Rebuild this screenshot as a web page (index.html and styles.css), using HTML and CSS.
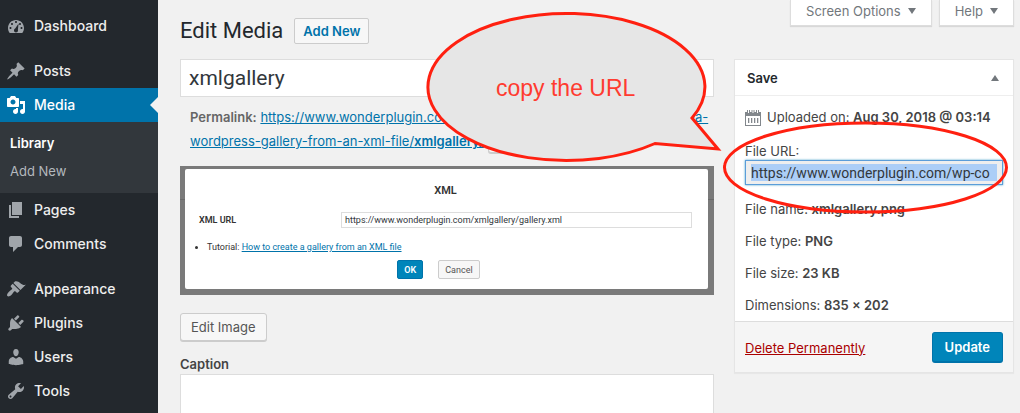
FILE: index.html
```html
<!DOCTYPE html>
<html lang="en">
  <head>
    <meta charset="UTF-8" />
    <meta name="viewport" content="width=device-width, initial-scale=1.0" />
    <title>Edit Media</title>
    <link rel="stylesheet" href="styles.css">
  </head>
  <body>
    <nav class="sidebar">
      <a href="#" class="menu-item">
        <svg class="icon" viewBox="0 0 20 20"><path fill-rule="evenodd" d="M3.76 17h12.48c1.1-1.37 1.76-3.11 1.76-5 0-4.42-3.58-8-8-8s-8 3.58-8 8c0 1.89.66 3.63 1.76 5zM10 5c.55 0 1 .45 1 1s-.45 1-1 1-1-.45-1-1 .45-1 1-1zM6 7c.55 0 1 .45 1 1s-.45 1-1 1-1-.45-1-1 .45-1 1-1zm8 0c.55 0 1 .45 1 1s-.45 1-1 1-1-.45-1-1 .45-1 1-1zM4.5 11c.55 0 1 .45 1 1s-.45 1-1 1-1-.45-1-1 .45-1 1-1zm11 0c.55 0 1 .45 1 1s-.45 1-1 1-1-.45-1-1 .45-1 1-1zM12.6 7.5l-.7 6.1c.1.2.1.5.1.8 0 1.1-.9 2-2 2s-2-.9-2-2c0-.8.5-1.5 1.2-1.8z"/></svg>
        Dashboard
      </a>
      <a href="#" class="menu-item menu-group">
        <svg class="icon" viewBox="0 0 20 20"><path d="M10.44 3.02l1.82-1.82 6.36 6.35-1.83 1.82c-1.05-.68-2.48-.57-3.41.36l-.75.75c-.92.93-1.04 2.35-.35 3.41l-1.83 1.82-2.41-2.41-2.8 2.79c-.42.42-3.38 2.71-3.8 2.29s1.86-3.39 2.28-3.81l2.79-2.79L4.1 9.36l1.83-1.82c1.05.69 2.48.57 3.4-.36l.75-.75c.93-.92 1.05-2.35.36-3.41z"/></svg>
        Posts
      </a>
      <a href="#" class="menu-item current">
        <svg class="icon" viewBox="0 0 20 20"><path fill-rule="evenodd" d="M13 11V4c0-.55-.45-1-1-1h-1.67L9 1H5L3.67 3H2c-.55 0-1 .45-1 1v7c0 .55.45 1 1 1h10c.55 0 1-.45 1-1zM7 4.5c1.38 0 2.5 1.12 2.5 2.5S8.38 9.5 7 9.5 4.5 8.38 4.5 7 5.62 4.5 7 4.5zM14 6h5v10.5c0 1.38-1.12 2.5-2.5 2.5S14 17.88 14 16.5s1.12-2.5 2.5-2.5c.17 0 .34.02.5.05V9h-3V6zm-4 8.05V13h2v3.5c0 1.38-1.12 2.5-2.5 2.5S7 17.88 7 16.5 8.12 14 9.5 14c.17 0 .34.02.5.05z"/></svg>
        Media
      </a>
      <div class="submenu">
        <a href="#" class="active">Library</a>
        <a href="#">Add New</a>
      </div>
      <a href="#" class="menu-item">
        <svg class="icon" viewBox="0 0 20 20"><path d="M6 15V2h10v13H6zm-1 1h8v2H3V5h2v11z"/></svg>
        Pages
      </a>
      <a href="#" class="menu-item">
        <svg class="icon" viewBox="0 0 20 20"><path d="M5 2h9c1.1 0 2 .9 2 2v7c0 1.1-.9 2-2 2h-2l-5 5v-5H5c-1.1 0-2-.9-2-2V4c0-1.1.9-2 2-2z"/></svg>
        Comments
      </a>
      <a href="#" class="menu-item menu-group">
        <svg class="icon" viewBox="0 0 20 20"><path d="M14.48 11.06L7.41 3.99l1.5-1.5c.5-.56 2.3-.47 3.51.32 1.21.8 1.43 1.28 2.91 2.1 1.18.64 2.45 1.26 4.45.85zm-.71.71L6.7 4.7 4.93 6.47c-.39.39-.39 1.02 0 1.41l1.06 1.06c.39.39.39 1.03 0 1.42-.6.6-1.43 1.11-2.21 1.69-.35.26-.7.53-1.01.84C1.43 14.23.4 16.08 1.4 17.07c.99 1 2.84-.03 4.18-1.36.31-.31.58-.66.85-1.02.57-.78 1.08-1.61 1.69-2.21.39-.39 1.02-.39 1.41 0l1.06 1.06c.39.39 1.02.39 1.41 0z"/></svg>
        Appearance
      </a>
      <a href="#" class="menu-item">
        <svg class="icon" viewBox="0 0 20 20"><path d="M13.11 4.36L9.87 7.6 8 5.73l3.24-3.24c.35-.34 1.05-.2 1.56.32.52.51.66 1.21.31 1.55zm-8 1.77l.91-1.12 9.01 9.01-1.19.84c-.71.71-2.63 1.16-3.82 1.16H6.14L4.9 17.26c-.59.59-1.54.59-2.12 0-.59-.58-.59-1.53 0-2.12l1.24-1.24v-3.88c0-1.13.4-3.19 1.09-3.89zm7.26 3.97l3.24-3.24c.34-.35 1.04-.21 1.55.31.52.51.66 1.21.31 1.55l-3.24 3.25z"/></svg>
        Plugins
      </a>
      <a href="#" class="menu-item">
        <svg class="icon" viewBox="0 0 20 20"><path d="M10 9.25c-2.27 0-2.73-3.44-2.73-3.44C7 4.02 7.82 2 9.97 2c2.16 0 2.98 2.02 2.71 3.81 0 0-.41 3.44-2.68 3.44zm0 2.57L12.72 10c2.39 0 4.52 2.33 4.52 4.53v2.49s-3.65 1.13-7.24 1.13c-3.65 0-7.24-1.13-7.24-1.13v-2.49c0-2.25 1.94-4.48 4.47-4.48z"/></svg>
        Users
      </a>
      <a href="#" class="menu-item">
        <svg class="icon" viewBox="0 0 20 20"><path fill-rule="evenodd" d="M16.68 9.77c-1.34 1.34-3.3 1.67-4.95.99l-5.41 6.52c-.99.99-2.59.99-3.58 0s-.99-2.59 0-3.57l6.52-5.42c-.68-1.65-.35-3.61.99-4.95 1.28-1.28 3.12-1.62 4.72-1.06l-2.89 2.89 2.82 2.82 2.86-2.87c.53 1.58.18 3.39-1.08 4.65zM3.81 16.21c.4.39 1.04.39 1.43 0 .4-.4.4-1.04 0-1.43-.39-.4-1.03-.4-1.43 0-.39.39-.39 1.03 0 1.43z"/></svg>
        Tools
      </a>
    </nav>

    <main class="content">
      <header class="page-header">
        <h1>Edit Media</h1>
        <a href="#" class="add-new">Add New</a>
        <div class="screen-tabs">
          <button type="button">Screen Options <span class="arrow-down"></span></button>
          <button type="button">Help <span class="arrow-down"></span></button>
        </div>
      </header>

      <form class="columns">
        <div class="editor">
          <input type="text" class="title-input" aria-label="Title" value="xmlgallery" />
          <div class="permalink">
            <strong>Permalink:</strong>
            <a href="#">https://www.wonderplugin.com/wordpress-gallery-faq/how-to-create-a-wordpress-gallery-from-an-xml-file/<b>xmlgallery/</b></a>
            <button type="button" class="button button-small">Edit</button>
          </div>

          <!-- Attachment preview -->
          <div class="preview">
            <div class="dialog">
              <h2>XML</h2>
              <div class="dialog-row">
                <label for="xml-url">XML URL</label>
                <input type="text" id="xml-url" value="https://www.wonderplugin.com/xmlgallery/gallery.xml" />
              </div>
              <ul>
                <li>Tutorial: <a href="#">How to create a gallery from an XML file</a></li>
              </ul>
              <div class="dialog-buttons">
                <button type="button" class="ok">OK</button>
                <button type="button">Cancel</button>
              </div>
            </div>
          </div>

          <button type="button" class="button edit-image">Edit Image</button>
          <label for="caption" class="caption-label">Caption</label>
          <textarea id="caption" class="caption"></textarea>
        </div>

        <aside class="save-box">
          <div class="save-header">
            <h2>Save</h2>
            <button type="button" aria-label="Toggle panel"><span class="arrow-up"></span></button>
          </div>
          <div class="save-body">
            <div class="uploaded">
              <svg class="calendar" viewBox="0 0 16 17"><path fill-rule="evenodd" d="M0 3h2V1h3v2h1.5V1h3v2H11V1h3v2h2v14H0zM1 7v9h14V7zM3 1v3h1V1zM7.5 1v3h1V1zM12 1v3h1V1zM3 9h1.3v5H3zM6 9h1.3v5H6zM9 9h1.3v5H9zM12 9h1.3v5H12z"/></svg>
              <span>Uploaded on: <b>Aug 30, 2018 @ 03:14</b></span>
            </div>
            <label for="file-url">File URL:</label>
            <input type="text" id="file-url" class="file-url" readonly value="https://www.wonderplugin.com/wp-co" />
            <div class="info">File name: <b>xmlgallery.png</b></div>
            <div class="info">File type: <b>PNG</b></div>
            <div class="info">File size: <b>23 KB</b></div>
            <div class="info">Dimensions: <b>835 × 202</b></div>
          </div>
          <div class="save-footer">
            <a href="#" class="delete">Delete Permanently</a>
            <button type="submit" class="update">Update</button>
          </div>
        </aside>
      </form>
    </main>

    <!-- Callout and highlight over the page -->
    <svg class="annotations" width="1020" height="413" viewBox="0 0 1020 413">
      <path class="callout" d="M655 143.5A138.5 73.5 0 1 1 692 118L718 149Z"/>
      <ellipse class="ring" cx="865.5" cy="167.5" rx="141" ry="44.5"/>
      <text x="496" y="96">copy the URL</text>
    </svg>
  </body>
</html>
```

FILE: styles.css
```css
* {
  box-sizing: border-box;
}

body {
  margin: 0;
  height: 100vh;
  overflow: hidden;
  display: flex;
  position: relative;
  background: #f1f1f1;
  color: #444;
  font-family: Inter, "Liberation Sans", sans-serif;
  font-size: 13px;
  line-height: 20px;
}

h1,
h2,
ul {
  margin: 0;
  padding: 0;
}

a {
  color: #0073aa;
}

b,
strong {
  font-weight: 600;
}

button,
input,
textarea {
  font-family: inherit;
  font-size: inherit;
  color: #32373c;
  margin: 0;
}

/* Sidebar */
.sidebar {
  flex: 0 0 158px;
  padding-top: 9px;
  background: #23282d;
}

.menu-item {
  display: flex;
  align-items: center;
  gap: 8px;
  height: 34px;
  padding-left: 6px;
  color: #eee;
  font-size: 14px;
  font-weight: 500;
  text-decoration: none;
}

.menu-group {
  margin-top: 11px;
}

.icon {
  width: 20px;
  height: 20px;
  fill: #a0a5aa;
}

.menu-item.current {
  background: #0073aa;
  color: #fff;
}

.current .icon {
  fill: #fff;
}

.current::after {
  content: "";
  margin-left: auto;
  border: 8px solid transparent;
  border-left: 0;
  border-right-color: #f1f1f1;
}

.submenu {
  padding: 7px 10px 8px;
  background: #32373c;
}

.submenu a {
  display: block;
  line-height: 28px;
  color: #b4b9be;
  text-decoration: none;
}

.submenu .active {
  color: #fff;
  font-weight: 600;
}

/* Page header */
.content {
  flex: 1;
  display: flex;
  flex-direction: column;
  padding: 0 6px 0 22px;
}

.page-header {
  display: flex;
  align-items: flex-start;
  height: 59px;
}

.page-header h1 {
  padding-top: 17px;
  font-family: Roboto, sans-serif;
  font-size: 22px;
  font-weight: 400;
  line-height: 28px;
  color: #23282d;
}

.add-new {
  margin: 18px 0 0 11px;
  padding: 2px 8px;
  border: 1px solid #ccc;
  border-radius: 2px;
  background: #f7f7f7;
  font-weight: 600;
  text-decoration: none;
}

.screen-tabs {
  display: flex;
  gap: 7px;
  margin-left: auto;
}

.screen-tabs button {
  display: flex;
  align-items: center;
  gap: 7px;
  height: 26px;
  padding: 0 15px 3px;
  border: 1px solid #ddd;
  border-top: 0;
  background: #fff;
  box-shadow: 0 1px 1px rgba(0, 0, 0, 0.1);
  color: #72777c;
}

.arrow-down,
.arrow-up {
  border: 4px solid transparent;
}

.arrow-down {
  border-top: 6px solid #72777c;
  border-bottom: 0;
}

.arrow-up {
  border-bottom: 6px solid #72777c;
  border-top: 0;
}

/* Editor column */
.columns {
  flex: 1;
  display: flex;
  align-items: flex-start;
  gap: 20px;
}

.editor {
  flex: 1;
  align-self: stretch;
  display: flex;
  flex-direction: column;
  min-width: 0;
}

.title-input {
  width: 100%;
  height: 38px;
  padding: 0 8px;
  border: 1px solid #ddd;
  font-family: Roboto, sans-serif;
  font-size: 21px;
  background: #fff;
}

.permalink {
  padding: 8px 4px 0 10px;
  height: 69px;
  line-height: 24px;
  color: #666;
}

.button {
  border: 1px solid #ccc;
  border-radius: 3px;
  background: #f7f7f7;
  box-shadow: 0 1px 0 #ccc;
  color: #555;
}

.button-small {
  height: 22px;
  padding: 0 8px;
  font-size: 11px;
}

.preview {
  padding: 3px 6px 6px 5px;
  background: linear-gradient(#7a7a7a 33px, #6a6a6a 33px, #6a6a6a 34px, #7a7a7a 34px);
}

.dialog {
  height: 120px;
  padding: 12px 16px 0 14px;
  border-radius: 2px;
  background: #fff;
  color: #333;
  font-family: Roboto, sans-serif;
  font-size: 9px;
}

.dialog h2 {
  font-size: 11px;
  font-weight: 600;
  line-height: 20px;
  text-align: center;
}

.dialog-row {
  display: flex;
  align-items: center;
  margin-top: 9px;
}

.dialog-row label {
  flex: 0 0 142px;
  font-weight: 600;
}

.dialog-row input {
  flex: 1;
  height: 16px;
  padding: 0 3px;
  border: 1px solid #ddd;
}

.dialog ul {
  padding-left: 8px;
  margin-top: 7px;
  line-height: 20px;
}

.dialog-buttons {
  display: flex;
  justify-content: center;
  gap: 15px;
  margin-top: 3px;
  padding-right: 14px;
}

.dialog-buttons button {
  height: 19px;
  padding: 0 6px;
  border: 1px solid #ccc;
  border-radius: 2px;
  background: #f7f7f7;
  color: #555;
}

.dialog-buttons .ok {
  border-color: #0073aa;
  background: #0085ba;
  color: #fff;
  font-weight: 600;
}

.edit-image {
  align-self: flex-start;
  height: 28px;
  margin-top: 18px;
  padding: 0 10px;
}

.caption-label {
  margin-top: 13px;
  font-weight: 600;
}

.caption {
  flex: 1;
  width: 100%;
  border: 1px solid #ddd;
  border-bottom: 0;
  background: #fff;
  resize: none;
}

/* Save box */
.save-box {
  flex: 0 0 280px;
  border: 1px solid #e5e5e5;
  background: #fff;
  box-shadow: 0 1px 1px rgba(0, 0, 0, 0.04);
}

.save-header {
  display: flex;
  align-items: center;
  justify-content: space-between;
  height: 36px;
  padding: 0 14px 0 12px;
  border-bottom: 1px solid #eee;
}

.save-header h2 {
  font-size: 13px;
  font-weight: 600;
  color: #23282d;
}

.save-header button {
  display: flex;
  padding: 0;
  border: 0;
  background: none;
}

.save-body {
  padding: 11px 10px 6px;
}

.uploaded {
  display: flex;
  align-items: center;
  gap: 6px;
  margin-bottom: 15px;
}

.calendar {
  width: 16px;
  height: 17px;
  fill: #82878c;
}

.save-body label {
  display: block;
  line-height: 18px;
}

.file-url {
  display: block;
  width: 100%;
  height: 25px;
  margin-bottom: 14px;
  padding: 3px 5px;
  border: 1px solid #5b9dd9;
  box-shadow: 0 0 2px rgba(30, 140, 190, 0.8);
  background: linear-gradient(#accef7, #accef7) content-box, #eee;
  font-family: Roboto, sans-serif;
  font-size: 14px;
  outline: none;
}

.info {
  line-height: 20px;
  margin-bottom: 12px;
}

.info:last-child {
  margin-bottom: 0;
}

.save-footer {
  display: flex;
  align-items: center;
  justify-content: space-between;
  padding: 10px 10px 9px;
  border-top: 1px solid #ddd;
  background: #f5f5f5;
}

.delete {
  color: #a00;
}

.update {
  height: 31px;
  padding: 0 12px;
  border: 1px solid #0073aa;
  border-bottom-width: 2px;
  border-radius: 3px;
  background: #0085ba;
  color: #fff;
  font-weight: 600;
}

/* Annotations */
.annotations {
  position: absolute;
  top: 0;
  left: 0;
  pointer-events: none;
}

.callout {
  fill: #e6e6e6;
  stroke: #ff2010;
  stroke-width: 3px;
}

.ring {
  fill: none;
  stroke: #ff2010;
  stroke-width: 3px;
}

.annotations text {
  fill: #ff3b30;
  font-family: "Liberation Sans", Arial, sans-serif;
  font-size: 23px;
}
```
